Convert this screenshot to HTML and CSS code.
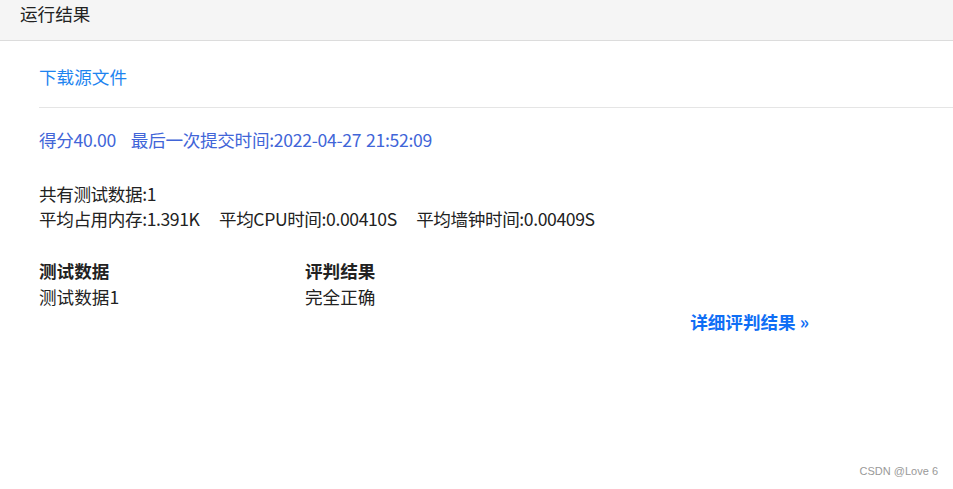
FILE: index.html
```html
<!DOCTYPE html>
<html lang="zh-CN">
  <head>
    <meta charset="UTF-8" />
    <meta name="viewport" content="width=device-width, initial-scale=1.0" />
    <title>运行结果</title>
    <link rel="stylesheet" href="styles.css">
  </head>
  <body>
    <div class="panel">
      <div class="panel-heading">运行结果</div>
      <div class="panel-body">
        <a class="link-download" href="#">下载源文件</a>
        <hr class="line" />

        <div class="score">得分40.00&nbsp;&nbsp;&nbsp;最后一次提交时间:2022-04-27 21:52:09</div>

        <div class="stats">
          <div>共有测试数据:1</div>
          <div>平均占用内存:1.391K&nbsp;&nbsp;&nbsp;&nbsp;平均CPU时间:0.00410S&nbsp;&nbsp;&nbsp;&nbsp;平均墙钟时间:0.00409S</div>
        </div>

        <table class="result-table">
          <tr>
            <th>测试数据</th>
            <th>评判结果</th>
          </tr>
          <tr>
            <td>测试数据1</td>
            <td>完全正确</td>
          </tr>
        </table>

        <div class="detail">
          <a class="link-detail" href="#">详细评判结果 &raquo;</a>
        </div>
      </div>
    </div>

    <div class="watermark">CSDN @Love 6</div>
  </body>
</html>
```
FILE: styles.css
```css
body {
  margin: 0;
  font-family: "Noto Sans CJK SC", sans-serif;
  font-size: 17.6px;
  color: #222;
  background: #fff;
}
.panel-heading {
  height: 41px;
  line-height: 27px;
  padding-left: 20px;
  background: #f5f5f5;
  border-bottom: 1px solid #dcdcdc;
  box-sizing: border-box;
}
.panel-body {
  padding-left: 39px;
}
.link-download {
  display: block;
  margin-top: 24px;
  line-height: 24px;
  color: #1e84f0;
  text-decoration: none;
}
.line {
  margin: 18px 0 0 0;
  border: 0;
  border-top: 1px solid #e5e5e5;
}
.score {
  margin-top: 20px;
  line-height: 24px;
  color: #4165d8;
  letter-spacing: -0.3px;
  word-spacing: 1.3px;
}
.stats {
  margin-top: 29px;
  line-height: 25px;
  letter-spacing: -0.4px;
  word-spacing: 1.3px;
}
.result-table {
  margin-top: 27px;
  border-collapse: collapse;
}
.result-table th,
.result-table td {
  padding: 0;
  width: 266px;
  text-align: left;
  line-height: 26px;
}
.result-table th {
  font-weight: bold;
}
.detail {
  width: 770px;
  text-align: right;
  line-height: 24px;
}
.link-detail {
  color: #0f6ef5;
  font-weight: bold;
  text-decoration: none;
}
.watermark {
  position: absolute;
  right: 15px;
  top: 465px;
  font-family: "Liberation Sans", sans-serif;
  font-size: 11px;
  color: #999;
}
```
